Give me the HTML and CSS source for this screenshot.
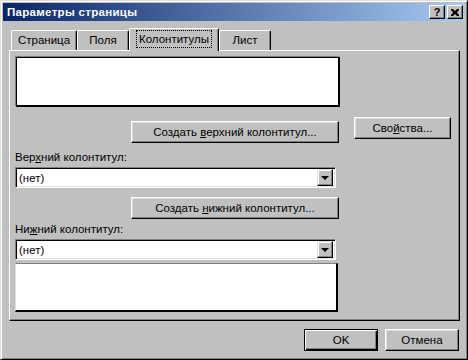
FILE: index.html
```html
<!DOCTYPE html>
<html lang="ru">
<head>
    <meta charset="UTF-8">
    <title>Параметры страницы</title>
    <link rel="stylesheet" href="styles.css">
</head>
<body>
    <div class="window">
        <div class="titlebar">
            <span class="title">Параметры страницы</span>
            <div class="title-buttons">
                <div class="cap-btn help">?</div>
                <div class="cap-btn close">
                    <svg width="8" height="7" viewBox="0 0 8 7">
                        <path d="M0 0h2l2 2 2-2h2v1l-2 2.5 2 2.5v1h-2l-2-2-2 2h-2v-1l2-2.5-2-2.5z" fill="#000"/>
                    </svg>
                </div>
            </div>
        </div>

        <div class="body">
            <div class="tabs">
                <div class="tab t1">Страница</div>
                <div class="tab t2">Поля</div>
                <div class="tab t3 active"><span class="focus">Колонтитулы</span></div>
                <div class="tab t4">Лист</div>
            </div>

            <div class="panel">
                <div class="left">
                    <div class="preview top"></div>
                    <div class="btn wide b1"><span>Создать <u>в</u>ерхний колонтитул...</span></div>
                    <div class="label l1">Вер<u>х</u>ний колонтитул:</div>
                    <div class="combo">
                        <span class="combo-text">(нет)</span>
                        <div class="combo-arrow"><span class="tri"></span></div>
                    </div>
                    <div class="btn wide b2"><span>Создать <u>н</u>ижний колонтитул...</span></div>
                    <div class="label l2">Ни<u>ж</u>ний колонтитул:</div>
                    <div class="combo c2">
                        <span class="combo-text">(нет)</span>
                        <div class="combo-arrow"><span class="tri"></span></div>
                    </div>
                    <div class="preview bottom"></div>
                </div>
                <div class="right">
                    <div class="btn props"><span>Сво<u>й</u>ства...</span></div>
                </div>
            </div>

            <div class="footer">
                <div class="btn default">OK</div>
                <div class="btn">Отмена</div>
            </div>
        </div>
    </div>
</body>
</html>
```

FILE: styles.css
```css
/* Classic dialog */
body {
    margin: 0;
    background: #c0c0c0;
    font-family: 'Liberation Sans', Arial, sans-serif;
    font-size: 11.5px;
    color: #000;
}

u {
    text-decoration: underline;
    text-underline-offset: 1px;
}

.window {
    width: 468px;
    height: 360px;
    box-sizing: border-box;
    background: #c0c0c0;
    border: 1px solid;
    border-color: #dfdfdf #000 #000 #dfdfdf;
    box-shadow: inset 1px 1px #fff, inset -1px -1px #808080;
    padding: 2px;
    display: flex;
    flex-direction: column;
}

/* Title bar */
.titlebar {
    height: 18px;
    background: linear-gradient(to right, #0a246a, #a6caf0);
    display: flex;
    align-items: center;
    justify-content: space-between;
    padding: 0 2px 0 4px;
}

.title {
    color: #fff;
    font-weight: bold;
    font-size: 11.5px;
    letter-spacing: 0.3px;
}

.title-buttons {
    display: flex;
    gap: 2px;
}

.cap-btn {
    width: 16px;
    height: 14px;
    box-sizing: border-box;
    background: #c0c0c0;
    border: 1px solid;
    border-color: #fff #000 #000 #fff;
    box-shadow: inset -1px -1px #808080;
    display: flex;
    align-items: center;
    justify-content: center;
    font-weight: bold;
    font-size: 11px;
    line-height: 1;
}

/* Body */
.body {
    flex: 1;
    padding: 7px 5px 0 6px;
    display: flex;
    flex-direction: column;
}

.tabs {
    display: flex;
    height: 22px;
    padding-left: 2px;
    align-items: flex-end;
    position: relative;
    z-index: 1;
}

.tab {
    height: 20px;
    box-sizing: border-box;
    border: 1px solid;
    border-bottom: none;
    border-color: #fff #000 transparent #fff;
    box-shadow: inset -1px 0 #808080;
    border-radius: 2px 2px 0 0;
    display: flex;
    align-items: center;
    justify-content: center;
    padding-bottom: 1px;
}

.t1 { width: 66px; }
.t2 { width: 52px; }
.t3 { width: 90px; }
.t4 { width: 52px; }

.tab.active {
    height: 23px;
    margin-bottom: -1px;
    background: #c0c0c0;
    padding-bottom: 3px;
}

.focus {
    outline: 1px dotted #000;
    outline-offset: 0;
    padding: 1px 2px 1px;
    line-height: 14px;
}

/* Panel */
.panel {
    height: 271px;
    box-sizing: border-box;
    border: 1px solid;
    border-color: #fff #000 #000 #fff;
    box-shadow: inset -1px -1px #808080;
    display: flex;
    padding: 0 0 0 5px;
}

.left {
    width: 323px;
    display: flex;
    flex-direction: column;
}

.preview {
    background: #fff;
    box-sizing: border-box;
}

.preview.top {
    margin-top: 6px;
    margin-left: 1px;
    width: 324px;
    height: 50px;
    border: 1px solid #000;
    border-right-width: 2px;
    border-bottom-width: 2px;
    box-shadow: -1px -1px #808080;
}

.preview.bottom {
    margin-top: 3px;
    width: 323px;
    height: 49px;
    border: 1px solid;
    border-color: #808080 #000 #000 #dfdfdf;
    border-right-width: 2px;
    border-bottom-width: 2px;
}

/* Buttons */
.btn {
    height: 22px;
    box-sizing: border-box;
    background: #c0c0c0;
    border: 1px solid;
    border-color: #fff #000 #000 #fff;
    box-shadow: inset -1px -1px #808080, inset 1px 1px #dfdfdf;
    display: flex;
    align-items: center;
    justify-content: center;
    padding-bottom: 1px;
}

.btn.wide {
    width: 208px;
    align-self: flex-end;
    margin-right: -1px;
}

.b1 { margin-top: 14px; }
.b2 { margin-top: 9px; }

.label {
    height: 13px;
    line-height: 13px;
}

.l1 { margin-top: 8px; }
.l2 { margin-top: 4px; }

/* Combo box */
.combo {
    margin-top: 3px;
    height: 21px;
    width: 321px;
    box-sizing: border-box;
    background: #fff;
    border: 1px solid;
    border-color: #808080 #fff #fff #808080;
    box-shadow: inset 1px 1px #000, inset -1px -1px #dfdfdf;
    display: flex;
    align-items: center;
    justify-content: space-between;
    padding: 2px;
}

.c2 { margin-top: 3px; }

.combo-text {
    padding-left: 1px;
}

.combo-arrow {
    width: 16px;
    height: 17px;
    box-sizing: border-box;
    background: #c0c0c0;
    border: 1px solid;
    border-color: #dfdfdf #000 #000 #dfdfdf;
    box-shadow: inset -1px -1px #808080, inset 1px 1px #fff;
    display: flex;
    align-items: center;
    justify-content: center;
}

.tri {
    width: 0;
    height: 0;
    border-left: 4px solid transparent;
    border-right: 4px solid transparent;
    border-top: 4px solid #000;
    margin-top: 1px;
}

/* Right column */
.right {
    padding-left: 16px;
}

.btn.props {
    margin-top: 66px;
    width: 97px;
}

/* Footer */
.footer {
    display: flex;
    justify-content: flex-end;
    gap: 7px;
    margin-top: 8px;
    padding-right: 1px;
}

.footer .btn {
    width: 74px;
}

.btn.default {
    border: 1px solid #000;
    box-shadow: inset 1px 1px #fff, inset -1px -1px #000, inset -2px -2px #808080;
}
```
